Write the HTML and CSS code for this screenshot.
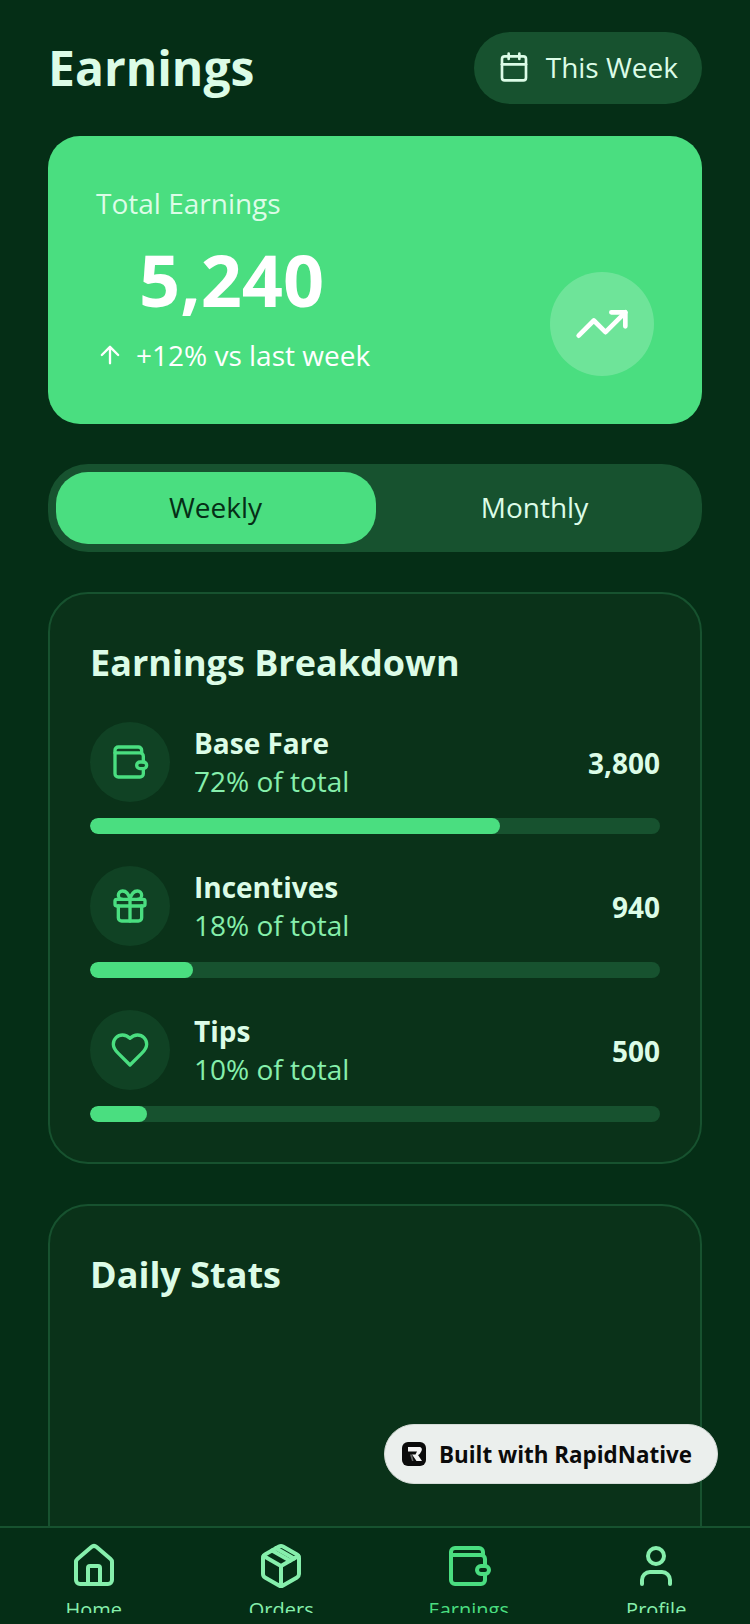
FILE: index.html
```html
<!DOCTYPE html>
<html lang="en">
<head>
    <meta charset="UTF-8">
    <meta name="viewport" content="width=device-width, initial-scale=1.0">
    <title>Earnings</title>
    <link rel="stylesheet" href="styles.css">
</head>
<body>
    <div class="screen">
        <div class="content">
            <div class="header">
                <h1>Earnings</h1>
                <div class="range-pill">
                    <svg class="icon-range" viewBox="0 0 24 24"><path d="M8 2v4M16 2v4"/><rect x="3" y="4" width="18" height="18" rx="2"/><path d="M3 10h18"/></svg>
                    <span>This Week</span>
                </div>
            </div>

            <div class="total-card">
                <div class="total-left">
                    <div class="total-label">Total Earnings</div>
                    <div class="total-value">5,240</div>
                    <div class="total-change">
                        <svg class="icon-up" viewBox="0 0 24 24"><path d="M12 19V5M5 12l7-7 7 7"/></svg>
                        <span>+12% vs last week</span>
                    </div>
                </div>
                <div class="trend-circle">
                    <svg class="icon-trend" viewBox="0 0 24 24"><path d="M22 7l-8.500 8.500-5-5L2 17"/><path d="M16 7h6v6"/></svg>
                </div>
            </div>

            <div class="toggle">
                <div class="toggle-item active">Weekly</div>
                <div class="toggle-item">Monthly</div>
            </div>

            <div class="panel">
                <h2>Earnings Breakdown</h2>
                <div class="row">
                    <div class="row-top">
                        <div class="row-icon">
                            <svg viewBox="0 0 24 24"><path d="M19 6.500V5a2 2 0 0 0-2-2H5a2 2 0 0 0-2 2v14a2 2 0 0 0 2 2h13a2 2 0 0 0 2-2v-3"/><path d="M3 6.500h15a2 2 0 0 1 2 2V12"/><rect x="16" y="12" width="6" height="4" rx="2"/></svg>
                        </div>
                        <div class="row-text">
                            <div class="row-name">Base Fare</div>
                            <div class="row-sub">72% of total</div>
                        </div>
                        <div class="row-amount">3,800</div>
                    </div>
                    <div class="bar"><div class="bar-fill" style="width: 72%"></div></div>
                </div>
                <div class="row">
                    <div class="row-top">
                        <div class="row-icon">
                            <svg viewBox="0 0 24 24"><rect x="3" y="8" width="18" height="4" rx="1"/><path d="M12 8v13"/><path d="M19 12v7a2 2 0 0 1-2 2H7a2 2 0 0 1-2-2v-7"/><path d="M7.500 8a2.500 2.500 0 0 1 0-5A4.800 8 0 0 1 12 8a4.800 8 0 0 1 4.500-5 2.500 2.500 0 0 1 0 5"/></svg>
                        </div>
                        <div class="row-text">
                            <div class="row-name">Incentives</div>
                            <div class="row-sub">18% of total</div>
                        </div>
                        <div class="row-amount">940</div>
                    </div>
                    <div class="bar"><div class="bar-fill" style="width: 18%"></div></div>
                </div>
                <div class="row">
                    <div class="row-top">
                        <div class="row-icon">
                            <svg viewBox="0 0 24 24"><path d="M19 14c1.490-1.460 3-3.210 3-5.500A5.500 5.500 0 0 0 16.500 3c-1.760 0-3 .5-4.500 2-1.500-1.500-2.740-2-4.500-2A5.500 5.500 0 0 0 2 8.500c0 2.300 1.500 4.050 3 5.500l7 7Z"/></svg>
                        </div>
                        <div class="row-text">
                            <div class="row-name">Tips</div>
                            <div class="row-sub">10% of total</div>
                        </div>
                        <div class="row-amount">500</div>
                    </div>
                    <div class="bar"><div class="bar-fill" style="width: 10%"></div></div>
                </div>
            </div>

            <div class="panel">
                <h2>Daily Stats</h2>
                <div class="chart-area"></div>
            </div>
        </div>

        <div class="built-badge">
            <svg class="built-logo" viewBox="0 0 24 24">
                <rect width="24" height="24" rx="6" fill="#0b0b0b"/>
                <path d="M6 5h11c2.500 0 3.500 2 2.500 4L18 11.500c-.5.8-1.200 1.200-2 1.500l4 6h-5.500l-4.500-6.500h3.500L15 9.500H6Z" fill="#f4f4f4"/>
                <path d="M10 12.500h-2L10 19h1.500Z" fill="#6a6a6a"/>
            </svg>
            <span>Built with RapidNative</span>
        </div>

        <div class="tabbar">
            <div class="tab">
                <svg viewBox="0 0 24 24"><path d="M15 21v-8a1 1 0 0 0-1-1h-4a1 1 0 0 0-1 1v8"/><path d="M3 10a2 2 0 0 1 .7-1.500l7-6a2 2 0 0 1 2.600 0l7 6A2 2 0 0 1 21 10v9a2 2 0 0 1-2 2H5a2 2 0 0 1-2-2z"/></svg>
                <span>Home</span>
            </div>
            <div class="tab">
                <svg viewBox="0 0 24 24"><path d="M11 21.700a2 2 0 0 0 2 0l7-4A2 2 0 0 0 21 16V8a2 2 0 0 0-1-1.730l-7-4a2 2 0 0 0-2 0l-7 4A2 2 0 0 0 3 8v8a2 2 0 0 0 1 1.730z"/><path d="M12 22V12"/><path d="M3.300 7 12 12l8.700-5"/><path d="m7.500 4.270 9 5.150"/><path d="m9.500 3.100 9 5.150"/></svg>
                <span>Orders</span>
            </div>
            <div class="tab active">
                <svg viewBox="0 0 24 24"><path d="M19 6.500V5a2 2 0 0 0-2-2H5a2 2 0 0 0-2 2v14a2 2 0 0 0 2 2h13a2 2 0 0 0 2-2v-3"/><path d="M3 6.500h15a2 2 0 0 1 2 2V12"/><rect x="16" y="12" width="6" height="4" rx="2"/></svg>
                <span>Earnings</span>
            </div>
            <div class="tab">
                <svg viewBox="0 0 24 24"><path d="M19 21v-2a4 4 0 0 0-4-4H9a4 4 0 0 0-4 4v2"/><circle cx="12" cy="7" r="4"/></svg>
                <span>Profile</span>
            </div>
        </div>
    </div>
</body>
</html>
```

FILE: styles.css
```css
* {
    box-sizing: border-box;
}

html, body {
    margin: 0;
    padding: 0;
}

body {
    font-family: "Open Sans", "Liberation Sans", sans-serif;
    background-color: #052e16;
    color: #dcfce7;
}

svg {
    fill: none;
    stroke: currentColor;
    stroke-width: 2;
    stroke-linecap: round;
    stroke-linejoin: round;
}

.screen {
    position: relative;
    width: 750px;
    height: 1624px;
    overflow: hidden;
}

.content {
    padding: 32px 48px 0;
    display: flex;
    flex-direction: column;
}

.header {
    display: flex;
    justify-content: space-between;
    align-items: center;
    height: 72px;
}

h1 {
    margin: 0;
    font-size: 48px;
    line-height: 72px;
    font-weight: 700;
}

.range-pill {
    display: flex;
    align-items: center;
    gap: 16px;
    height: 72px;
    padding: 0 24px 2px;
    border-radius: 36px;
    background-color: #17522f;
    font-size: 28px;
}

.icon-range {
    width: 32px;
    height: 32px;
}

.total-card {
    display: flex;
    justify-content: space-between;
    align-items: flex-end;
    margin-top: 32px;
    height: 288px;
    padding: 48px;
    border-radius: 32px;
    background-color: #4ade80;
}

.total-left {
    margin-bottom: 1px;
}

.total-label {
    font-size: 28px;
    line-height: 40px;
    color: #dcfce7;
}

.total-value {
    margin-left: 43px;
    font-size: 72px;
    line-height: 112px;
    font-weight: 700;
    color: #fff;
}

.total-change {
    display: flex;
    align-items: center;
    gap: 12px;
    font-size: 28px;
    line-height: 40px;
    color: #fff;
}

.icon-up {
    width: 28px;
    height: 28px;
}

.trend-circle {
    display: flex;
    align-items: center;
    justify-content: center;
    width: 104px;
    height: 104px;
    border-radius: 50%;
    background-color: rgba(255, 255, 255, 0.2);
    color: #fff;
}

.icon-trend {
    width: 56px;
    height: 56px;
}

.toggle {
    display: flex;
    margin-top: 40px;
    height: 88px;
    padding: 8px;
    border-radius: 40px;
    background-color: #17522f;
}

.toggle-item {
    flex: 1;
    display: flex;
    align-items: center;
    justify-content: center;
    padding: 0 1px 2px 0;
    border-radius: 32px;
    font-size: 28px;
}

.toggle-item.active {
    flex: 0 0 320px;
    background-color: #4ade80;
    color: #052e16;
}

.panel {
    margin-top: 40px;
    padding: 40px;
    border: 2px solid #17522f;
    border-radius: 40px;
    background-color: #0a3219;
}

h2 {
    margin: 0 0 30px;
    font-size: 36px;
    line-height: 58px;
    font-weight: 700;
}

.chart-area {
    height: 400px;
}

.row {
    margin-bottom: 32px;
}

.row:last-child {
    margin-bottom: 0;
}

.row-top {
    display: flex;
    align-items: center;
}

.row-icon {
    display: flex;
    align-items: center;
    justify-content: center;
    width: 80px;
    height: 80px;
    border-radius: 50%;
    background-color: #104224;
    color: #4ade80;
}

.row-icon svg {
    width: 40px;
    height: 40px;
}

.row-text {
    flex: 1;
    margin-left: 24px;
}

.row-name {
    font-size: 28px;
    line-height: 36px;
    font-weight: 700;
}

.row-sub {
    margin-top: 1px;
    font-size: 28px;
    line-height: 38px;
    color: #86efac;
}

.row-amount {
    padding-top: 2px;
    font-size: 28px;
    font-weight: 700;
    color: #dcfce7;
}

.bar {
    margin-top: 16px;
    height: 16px;
    border-radius: 8px;
    background-color: #17522f;
    overflow: hidden;
}

.bar-fill {
    height: 100%;
    border-radius: 8px;
    background-color: #4ade80;
}

.built-badge {
    position: absolute;
    left: 384px;
    top: 1424px;
    display: flex;
    align-items: center;
    gap: 13px;
    width: 334px;
    height: 60px;
    padding: 0 14px 0 17px;
    border: 1px solid #d5dbd7;
    border-radius: 30px;
    background-color: #ebefed;
    color: #0b0b0b;
    font-size: 22.4px;
    font-weight: 700;
    white-space: nowrap;
}

.built-logo {
    width: 24px;
    height: 24px;
    stroke: none;
}

.tabbar {
    position: absolute;
    left: 0;
    right: 0;
    bottom: 0;
    display: flex;
    height: 98px;
    padding-top: 14px;
    border-top: 2px solid #17522f;
    background-color: #052e16;
}

.tab {
    flex: 1;
    display: flex;
    flex-direction: column;
    align-items: center;
    height: 71px;
    overflow: hidden;
    color: #86efac;
    font-size: 20px;
    line-height: 28px;
}

.tab svg {
    flex: none;
    width: 48px;
    height: 48px;
    margin-bottom: 6px;
}

.tab.active {
    color: #4ade80;
}
```
